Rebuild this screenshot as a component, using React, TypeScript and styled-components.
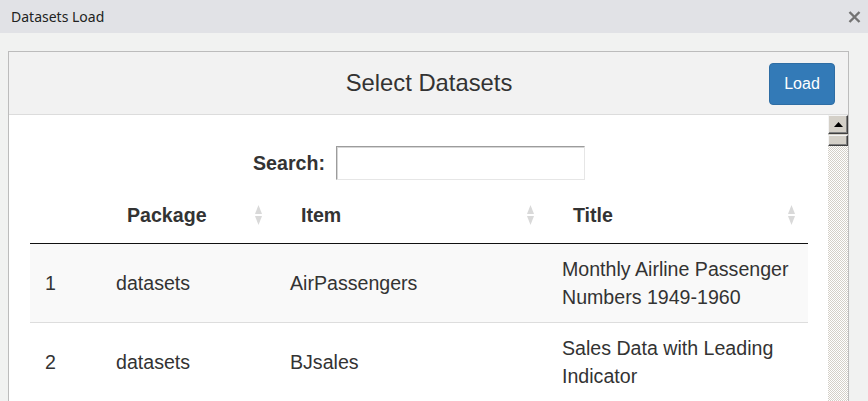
import React from "react";
import styled, { createGlobalStyle } from "styled-components";

const Global = createGlobalStyle`
  html, body { margin: 0; padding: 0; }
  body {
    background: #f1f2f1;
    overflow: hidden;
    height: 401px;
    font-family: "Liberation Sans", Arial, sans-serif;
    color: #333;
  }
`;

const Window = styled.div`
  display: flex;
  flex-direction: column;
  height: 401px;
  overflow: hidden;
`;

const TitleBar = styled.div`
  height: 33px;
  flex: 0 0 33px;
  background: #e1e2e6;
  display: flex;
  align-items: center;
  justify-content: space-between;
  padding: 0 6px 0 11px;
  font-family: "Noto Sans", "Open Sans", sans-serif;
  font-size: 14px;
  color: #222;
`;

const CloseBtn = styled.div`
  width: 16px;
  height: 16px;
  display: flex;
  align-items: center;
  justify-content: center;
`;

const Body = styled.div`
  flex: 1;
  padding: 18px 19px 0 8px;
  min-height: 0;
`;

const Panel = styled.div`
  border: 1px solid #bcbcbc;
  background: #fff;
  height: 100%;
  display: flex;
  flex-direction: column;
`;

const PanelHeader = styled.div`
  display: grid;
  grid-template-columns: 1fr auto 1fr;
  align-items: center;
  height: 62px;
  background: #f2f2f2;
  border-bottom: 1px solid #dcdcdc;
  padding: 0 13px;
`;

const PanelTitle = styled.div`
  grid-column: 2;
  font-size: 23.8px;
  color: #333;
  padding-left: 1px;
`;

const LoadButton = styled.button`
  grid-column: 3;
  justify-self: end;
  margin-top: 1px;
  width: 66px;
  height: 42px;
  background: #337ab7;
  border: 1px solid #2e6da4;
  border-radius: 4px;
  color: #fff;
  font-family: "Liberation Sans", Arial, sans-serif;
  font-size: 16px;
  padding: 0;
`;

const ContentRow = styled.div`
  flex: 1;
  display: flex;
  min-height: 0;
`;

const Main = styled.div`
  flex: 1;
  padding: 31px 21px 0 21px;
  overflow: hidden;
`;

const SearchRow = styled.div`
  display: flex;
  justify-content: center;
  align-items: center;
  gap: 11px;
  padding-left: 1px;
`;

const SearchLabel = styled.label`
  font-weight: bold;
  font-size: 19.6px;
  color: #333;
`;

const SearchInput = styled.div`
  box-sizing: border-box;
  width: 249px;
  height: 34px;
  border: 1px solid;
  border-color: #9c9c9c #e6e6e6 #e6e6e6 #9c9c9c;
  box-shadow: inset 1px 1px 0 #d6d6d6;
  background: #fff;
`;

const Table = styled.table`
  margin-top: 7px;
  width: 778px;
  border-collapse: collapse;
  table-layout: fixed;
  font-size: 19.6px;
  line-height: 28px;
`;

const Th = styled.th<{ $w: number }>`
  box-sizing: border-box;
  position: relative;
  width: ${(p) => p.$w}px;
  text-align: left;
  font-weight: bold;
  padding: 14px 30px 14px 26px;
  border-bottom: 1px solid #111;
  color: #333;
`;

const SortIcon = styled.span`
  position: absolute;
  right: 13px;
  top: 50%;
  transform: translateY(-50%);
  display: flex;
  flex-direction: column;
  gap: 2px;
`;

const Tr = styled.tr<{ $odd: boolean }>`
  background: ${(p) => (p.$odd ? "#f9f9f9" : "#fff")};
`;

const Td = styled.td`
  box-sizing: border-box;
  padding: 11px 15px;
  vertical-align: middle;
  border-top: 1px solid #dddddd;
  color: #333;
`;

const ScrollBar = styled.div`
  width: 20px;
  flex: 0 0 20px;
  display: flex;
  flex-direction: column;
  background: repeating-conic-gradient(#d4d0c8 0 25%, #ffffff 0 50%) 0 0 / 2px 2px;
`;

const ScrollBtn = styled.div<{ $h: number }>`
  box-sizing: border-box;
  height: ${(p) => p.$h}px;
  background: #d4d0c8;
  border-top: 1px solid #f4f4f4;
  border-left: 1px solid #f4f4f4;
  border-right: 1px solid #404040;
  border-bottom: 1px solid #404040;
  box-shadow: inset -1px -1px 0 #808080;
  display: flex;
  align-items: center;
  justify-content: center;
`;

const ThumbGap = styled.div`
  height: 1px;
  background: #d4d0c8;
`;

function Sort() {
  return (
    <SortIcon>
      <svg width="7" height="9" viewBox="0 0 7 9">
        <path d="M3.5 0 L7 9 L0 9 Z" fill="#d9d9d9" />
      </svg>
      <svg width="7" height="9" viewBox="0 0 7 9">
        <path d="M0 0 L7 0 L3.5 9 Z" fill="#d9d9d9" />
      </svg>
    </SortIcon>
  );
}

const rows = [
  { n: "1", pkg: "datasets", item: "AirPassengers", title: ["Monthly Airline Passenger", "Numbers 1949-1960"] },
  { n: "2", pkg: "datasets", item: "BJsales", title: ["Sales Data with Leading", "Indicator"] },
];

export default function App() {
  return (
    <>
      <Global />
      <Window>
        <TitleBar>
          <span>Datasets Load</span>
          <CloseBtn>
            <svg width="13" height="12" viewBox="0 0 13 12">
              <path d="M1.5 1 L11.5 11 M11.5 1 L1.5 11" stroke="#737373" strokeWidth="2.4" />
            </svg>
          </CloseBtn>
        </TitleBar>
        <Body>
          <Panel>
            <PanelHeader>
              <PanelTitle>Select Datasets</PanelTitle>
              <LoadButton>Load</LoadButton>
            </PanelHeader>
            <ContentRow>
              <Main>
                <SearchRow>
                  <SearchLabel>Search:</SearchLabel>
                  <SearchInput />
                </SearchRow>
                <Table>
                  <thead>
                    <tr>
                      <Th $w={71}></Th>
                      <Th $w={174}>
                        Package
                        <Sort />
                      </Th>
                      <Th $w={272}>
                        Item
                        <Sort />
                      </Th>
                      <Th $w={261}>
                        Title
                        <Sort />
                      </Th>
                    </tr>
                  </thead>
                  <tbody>
                    {rows.map((r, i) => (
                      <Tr key={r.n} $odd={i % 2 === 0}>
                        <Td>{r.n}</Td>
                        <Td>{r.pkg}</Td>
                        <Td>{r.item}</Td>
                        <Td>
                          {r.title[0]}
                          <br />
                          {r.title[1]}
                        </Td>
                      </Tr>
                    ))}
                  </tbody>
                </Table>
              </Main>
              <ScrollBar>
                <ScrollBtn $h={19}>
                  <svg width="9" height="5" viewBox="0 0 9 5">
                    <path d="M4.5 0 L9 5 L0 5 Z" fill="#000" />
                  </svg>
                </ScrollBtn>
                <ThumbGap />
                <ScrollBtn $h={11} />
              </ScrollBar>
            </ContentRow>
          </Panel>
        </Body>
      </Window>
    </>
  );
}
